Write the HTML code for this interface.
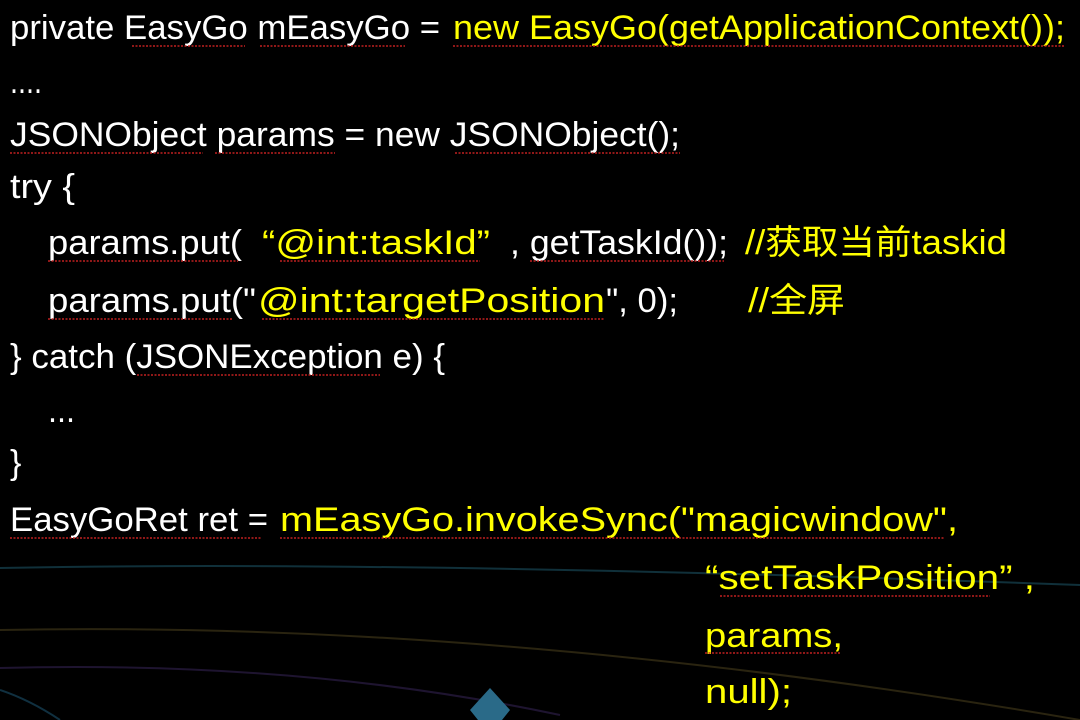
<!DOCTYPE html>
<html><head><meta charset="utf-8"><style>
html,body{margin:0;padding:0;background:#000;width:1080px;height:720px;overflow:hidden}
svg{display:block}
text{font-family:"Liberation Sans","Noto Sans CJK SC",sans-serif;font-size:34px}
.w{fill:#fff}.y{fill:#ffff00}
.u{stroke:#c02020;stroke-width:1.5;fill:none;stroke-dasharray:2 1.5}
</style></head><body>
<svg width="1080" height="720" viewBox="0 0 1080 720">
<path d="M0 568 Q400 560 1080 585" stroke="#10303a" stroke-width="2" fill="none"/>
<path d="M0 630 Q500 620 1080 720" stroke="#2a2410" stroke-width="2" fill="none"/>
<path d="M0 668 Q300 660 560 715" stroke="#1e1430" stroke-width="2" fill="none"/>
<path d="M0 690 Q30 700 60 720" stroke="#103040" stroke-width="2" fill="none"/>
<polygon points="490,688 470,710 478,720 502,720 510,710" fill="#2a6a88"/>

<text x="10" y="39" class="w" textLength="430" lengthAdjust="spacingAndGlyphs">private EasyGo mEasyGo = </text>
<text x="453" y="39" class="y" textLength="612" lengthAdjust="spacingAndGlyphs">new EasyGo(getApplicationContext());</text>
<text x="10" y="93" class="w" textLength="32" lengthAdjust="spacingAndGlyphs">....</text>
<text x="10" y="146" class="w" textLength="670" lengthAdjust="spacingAndGlyphs">JSONObject params = new JSONObject();</text>
<text x="10" y="198" class="w" textLength="65" lengthAdjust="spacingAndGlyphs">try {</text>
<text x="48" y="254" class="w" textLength="194" lengthAdjust="spacingAndGlyphs">params.put(  </text>
<text x="262" y="254" class="y" textLength="228" lengthAdjust="spacingAndGlyphs">“@int:taskId”</text>
<text x="510" y="254" class="w" textLength="218" lengthAdjust="spacingAndGlyphs">, getTaskId());</text>
<text x="745" y="254" class="y" textLength="262" lengthAdjust="spacingAndGlyphs">//获取当前taskid</text>
<text x="48" y="312" class="w" textLength="208" lengthAdjust="spacingAndGlyphs">params.put("</text>
<text x="258" y="312" class="y" textLength="347" lengthAdjust="spacingAndGlyphs">@int:targetPosition</text>
<text x="606" y="312" class="w" textLength="72" lengthAdjust="spacingAndGlyphs">", 0);</text>
<text x="748" y="312" class="y" textLength="97" lengthAdjust="spacingAndGlyphs">//全屏</text>
<text x="10" y="368" class="w" textLength="435" lengthAdjust="spacingAndGlyphs">} catch (JSONException e) {</text>
<text x="48" y="422" class="w" textLength="27" lengthAdjust="spacingAndGlyphs">...</text>
<text x="10" y="474" class="w">}</text>
<text x="10" y="531" class="w" textLength="258" lengthAdjust="spacingAndGlyphs">EasyGoRet ret = </text>
<text x="280" y="531" class="y" textLength="678" lengthAdjust="spacingAndGlyphs">mEasyGo.invokeSync("magicwindow",</text>
<text x="705" y="589" class="y" textLength="330" lengthAdjust="spacingAndGlyphs">“setTaskPosition” ,</text>
<text x="705" y="647" class="y" textLength="138" lengthAdjust="spacingAndGlyphs">params,</text>
<text x="705" y="703" class="y" textLength="87" lengthAdjust="spacingAndGlyphs">null);</text>

<path class="u" d="M132 46H245M260 46H405M453 46H1065M10 153H203M215 153H335M455 153H680M48 261H238M280 261H480M530 261H724M48 319H232M262 319H605M137 375H380M10 538H262M280 538H945M720 596H990M705 653H840"/>
</svg>
</body></html>
